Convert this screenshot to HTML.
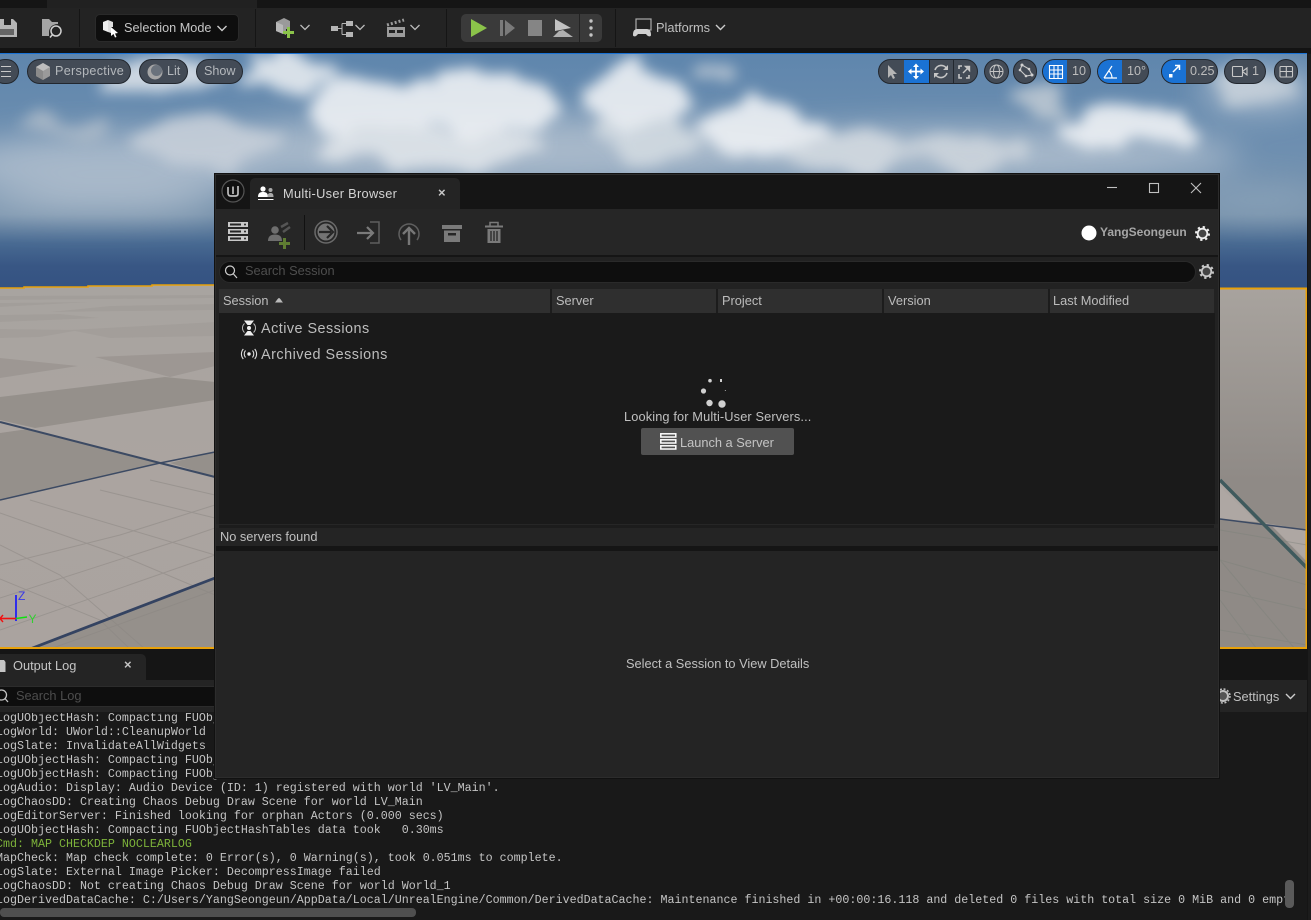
<!DOCTYPE html>
<html><head><meta charset="utf-8">
<style>
html,body{margin:0;padding:0;background:#151515;}
#r{position:relative;width:1311px;height:920px;overflow:hidden;background:#151515;font-family:"Liberation Sans",sans-serif;color:#c0c0c0;font-size:12.5px;}
.a{position:absolute;}
.t{position:absolute;white-space:pre;line-height:16px;}
svg{position:absolute;overflow:visible;}
.p{position:absolute;background:#434b56;border:1px solid #22272e;border-radius:13px;box-sizing:border-box;height:25px;top:59px;}
.blue{position:absolute;background:#1a72d4;top:0;bottom:0;}
.lg{position:absolute;left:-4px;font:11.67px/14px "Liberation Mono",monospace;white-space:pre;color:#c4c4c4;}
</style></head><body><div id="r">

<!-- top strip -->
<div class="a" style="left:47px;top:0;width:210px;height:8px;background:#212121"></div>
<div class="a" style="left:0;top:8px;width:1311px;height:40px;background:#232323"></div>
<div class="a" style="left:0;top:48px;width:1311px;height:5px;background:#131313"></div>
<div class="a" style="left:0;top:53px;width:1307px;height:1px;background:#1a72d4"></div>
<div class="a" style="left:79px;top:9px;width:1px;height:38px;background:#151515"></div>
<div class="a" style="left:255px;top:9px;width:1px;height:38px;background:#151515"></div>
<div class="a" style="left:446px;top:9px;width:1px;height:38px;background:#151515"></div>
<div class="a" style="left:615px;top:9px;width:1px;height:38px;background:#151515"></div>

<!-- save -->
<svg style="left:0;top:0" width="70" height="48"><path d="M-3 19H13L17 23V37H-3Z" fill="#b5b5b5"/><rect x="4" y="19" width="7" height="6" fill="#232323"/><rect x="0" y="29" width="14" height="6" fill="#232323" opacity=".55"/>
<path d="M42 19H49L52 22H58V24C52 24 49 28 49 32V36H42Z" fill="#a5a5a5"/><circle cx="56" cy="31" r="5" fill="none" stroke="#d0d0d0" stroke-width="1.500"/><path d="M52.500 34.500L50 37.500" stroke="#d0d0d0" stroke-width="1.500"/></svg>

<!-- selection mode -->
<div class="a" style="left:95px;top:14px;width:144px;height:28px;box-sizing:border-box;background:#0e0e0e;border:1px solid #2a2a2a;border-radius:5px"></div>
<svg style="left:102px;top:18px" width="18" height="20"><path d="M1 4L6 2V14L1 12Z" fill="#eee"/><path d="M6 2L11 4V9L9 9V15L6 14Z" fill="#ddd"/><path d="M9 9L16 15L13 15.500L14.500 19L13 19.500L11.500 16L9 18Z" fill="#fff"/></svg>
<div class="t" style="left:124px;top:20px;color:#c6c6c6;font-size:12.7px">Selection Mode</div>
<svg style="left:217px;top:25px" width="12" height="8"><path d="M.5 1L5 5.500L9.500 1" fill="none" stroke="#ccc" stroke-width="1.400"/></svg>

<!-- add / hierarchy / clapper -->
<svg style="left:270px;top:14px" width="160" height="28"><path d="M6 8L14 4L20 7V15H16V21L14 20L6 17Z" fill="#9a9a9a"/><path d="M6 8L13 11V20L6 17Z" fill="#b8b8b8"/><rect x="17" y="13" width="3" height="11" fill="#8bc34a"/><rect x="13" y="17" width="11" height="3" fill="#8bc34a"/>
<path d="M30.500 11L35 15.500L39.500 11" fill="none" stroke="#bbb" stroke-width="1.300"/>
<rect x="61" y="12" width="7" height="5" fill="#b5b5b5"/><rect x="76" y="7" width="7" height="5" fill="#b5b5b5"/><rect x="76" y="18" width="7" height="5" fill="#b5b5b5"/><path d="M68 14.500H72M72 9.500V20.500M72 9.500H76M72 20.500H76" stroke="#b5b5b5" fill="none"/>
<path d="M85.500 11L90 15.500L94.500 11" fill="none" stroke="#bbb" stroke-width="1.300"/>
<rect x="117" y="13" width="18" height="10" fill="#9c9c9c"/><rect x="119" y="16" width="6" height="3" fill="#232323"/><rect x="127" y="16" width="6" height="3" fill="#232323"/><path d="M117 11L134 6" stroke="#9c9c9c" stroke-width="3" stroke-dasharray="2 2"/>
<path d="M140.500 11L145 15.500L149.500 11" fill="none" stroke="#bbb" stroke-width="1.300"/></svg>

<!-- play -->
<div class="a" style="left:461px;top:14px;width:141px;height:28px;background:#3a3a3a;border-radius:5px"></div>
<div class="a" style="left:579px;top:14px;width:1px;height:28px;background:#232323"></div>
<svg style="left:461px;top:14px" width="141" height="28"><path d="M10 5L26 14L10 23Z" fill="#8bc34a"/><rect x="39" y="6" width="3" height="16" fill="#7a7a7a"/><path d="M44 6L54 14L44 22Z" fill="#7a7a7a"/><rect x="67" y="6" width="14" height="16" fill="#858585"/><path d="M94 5L110 14L94 17Z" fill="#c2c2c2"/><path d="M98 17L102 16L112 23H92Z" fill="#b0b0b0"/><circle cx="130" cy="7" r="1.700" fill="#c4c4c4"/><circle cx="130" cy="14" r="1.700" fill="#c4c4c4"/><circle cx="130" cy="21" r="1.700" fill="#c4c4c4"/></svg>

<!-- platforms -->
<svg style="left:632px;top:18px" width="22" height="20"><rect x="4" y="1" width="15" height="11" fill="none" stroke="#aaa" stroke-width="1.200"/><path d="M1 17C1 12 3 11 6 11H14C17 11 19 12 19 17C19 19 16 19 14 16H6C4 19 1 19 1 17Z" fill="#d0d0d0"/></svg>
<div class="t" style="left:656px;top:20px;color:#c0c0c0;font-size:12.8px">Platforms</div>
<svg style="left:715px;top:24px" width="12" height="8"><path d="M1 1L5.500 5.500L10 1" fill="none" stroke="#ccc" stroke-width="1.400"/></svg>

<!-- viewport -->
<svg style="left:0;top:54px;width:1307px;height:595px;overflow:hidden" width="1307" height="595" viewBox="0 54 1307 595">
<defs>
<linearGradient id="sky" x1="0" y1="54" x2="0" y2="290" gradientUnits="userSpaceOnUse"><stop offset="0" stop-color="#5f86ad"/><stop offset=".45" stop-color="#7090b0"/><stop offset=".68" stop-color="#7590aa"/><stop offset=".8" stop-color="#486a92"/><stop offset=".9" stop-color="#385684"/><stop offset="1" stop-color="#345382"/></linearGradient>
<linearGradient id="fl" x1="0" y1="288" x2="0" y2="649" gradientUnits="userSpaceOnUse"><stop offset="0" stop-color="#a8a4a0"/><stop offset=".5" stop-color="#aba4a0"/><stop offset="1" stop-color="#aaa39f"/></linearGradient>
<linearGradient id="fr" x1="0" y1="288" x2="0" y2="480" gradientUnits="userSpaceOnUse"><stop offset="0" stop-color="#a8a39e"/><stop offset="1" stop-color="#8f8a86"/></linearGradient>
<filter id="b1" x="-10%" y="-40%" width="120%" height="180%"><feTurbulence type="fractalNoise" baseFrequency=".018 .03" numOctaves="3" seed="4" result="n"/><feDisplacementMap in="SourceGraphic" in2="n" scale="45" xChannelSelector="R" yChannelSelector="G"/><feGaussianBlur stdDeviation="7"/></filter>
<filter id="b2" x="-30%" y="-30%" width="160%" height="160%"><feGaussianBlur stdDeviation="16"/></filter>
</defs>
<rect x="0" y="54" width="1307" height="240" fill="url(#sky)"/>
<g filter="url(#b2)" fill="#b5c2d0" opacity=".8">
<ellipse cx="120" cy="165" rx="170" ry="32"/><ellipse cx="500" cy="150" rx="330" ry="35"/><ellipse cx="960" cy="155" rx="280" ry="28"/><ellipse cx="90" cy="205" rx="130" ry="10"/><ellipse cx="1260" cy="200" rx="70" ry="16" fill="#8ea6bc"/><ellipse cx="1260" cy="90" rx="60" ry="22"/>
</g>
<g filter="url(#b1)" fill="#eef1f4" opacity=".9">
<ellipse cx="160" cy="75" rx="60" ry="14" fill="#d9e0e7"/><ellipse cx="285" cy="72" rx="52" ry="17" fill="#e5eaef"/><ellipse cx="375" cy="110" rx="72" ry="30"/><ellipse cx="490" cy="100" rx="66" ry="32"/><ellipse cx="210" cy="140" rx="70" ry="26" fill="#c6cfd9"/><ellipse cx="430" cy="148" rx="110" ry="20" fill="#dfe4e9"/>
<ellipse cx="635" cy="98" rx="50" ry="32"/><ellipse cx="650" cy="140" rx="45" ry="20" fill="#d2dae1"/><ellipse cx="765" cy="130" rx="65" ry="24"/><ellipse cx="860" cy="152" rx="60" ry="18" fill="#d2d9e0"/><ellipse cx="720" cy="75" rx="22" ry="10" fill="#bcc8d4"/>
<ellipse cx="1125" cy="128" rx="68" ry="21"/><ellipse cx="965" cy="152" rx="65" ry="16" fill="#ccd4dc"/><ellipse cx="1040" cy="103" rx="30" ry="13" fill="#bcc7d2"/><ellipse cx="1250" cy="85" rx="45" ry="16" fill="#c6d0da"/><ellipse cx="60" cy="128" rx="42" ry="12" fill="#a9b8c7"/>
</g>
<!-- floor -->
<polygon points="0,288 24,288 24,287 88,287 88,286 152,286 152,285 215,285 215,284 1219,284 1219,288 1307,288 1307,649 0,649" fill="url(#fl)"/>
<!-- horizon bands -->
<g fill="#8f8a86" opacity=".2">
<polygon points="0,296 215,295 215,298 0,300"/><polygon points="0,303 90,302 0,307"/><polygon points="110,306 215,304 215,310 50,312"/><polygon points="0,315 60,314 100,318 0,322"/><polygon points="70,330 215,322 215,336 110,338"/><polygon points="0,329 80,330 40,337 0,338"/>
</g>
<!-- dark tiles -->
<g fill="#9d9793"><polygon points="0,358 78,366 0,378"/><polygon points="95,357 215,352 215,366 170,377"/></g>
<g fill="#95908b">
<polygon points="0,397 165,377 215,382 215,400 35,428 0,420"/><polygon points="0,433 28,429 160,463 0,500"/><polygon points="170,463 215,452 215,477"/><polygon points="30,649 215,578 215,649"/>
</g>
<polygon points="1219,289 1307,289 1307,530 1258,522 1219,480" fill="url(#fr)"/>
<polygon points="1219,519 1257,522 1273,527 1307,562 1307,649 1219,649" fill="#8f8a86"/>
<polygon points="1219,486 1257,522 1219,518" fill="#aea7a3"/>
<polygon points="1273,527 1307,530 1307,560" fill="#aea7a3"/>
<!-- thin lines -->
<g stroke="#8a8682" stroke-width="1" fill="none" opacity=".5">
<path d="M0 513L120 555L215 595M0 545L60 575L145 649M0 579L100 620L130 649M30 500L215 555M100 490L215 518M150 480L215 495"/>
<path d="M0 565L120 535L215 505M0 598L180 540L215 528M0 630L215 555M50 649L215 590"/>
</g>
<g stroke="#7d807a" stroke-width="1" fill="none" opacity=".45">
<path d="M1220 560L1295 649M1220 600L1257 649M1220 530L1307 545M1220 560L1307 585M1220 590L1307 610M1220 630L1307 645"/>
</g>
<!-- major lines -->
<g fill="none" stroke="#3c4a63">
<path d="M0 422L160 463L215 477" stroke-width="2"/><path d="M0 500L160 463L215 452" stroke-width="1.500"/>
<path d="M1220 519L1307 530" stroke-width="1.500"/>
</g>
<path d="M30 649L215 578" stroke="#344361" stroke-width="2.800" fill="none"/>
<path d="M1220 480L1307 568" stroke="#3f5a5d" stroke-width="3.500" fill="none"/>
<!-- orange border -->
<path d="M0 288H24V287H88V286H152V285H215" stroke="#e8a10a" stroke-width="1.600" fill="none"/>
<path d="M1219 288.500H1306.500V648H0" stroke="#e8a10a" stroke-width="2" fill="none"/>
<!-- gizmo -->
<path d="M16 621V595" stroke="#1010ff" stroke-width="1.600"/><path d="M0 618.500H16" stroke="#f01010" stroke-width="1.600"/><path d="M16 618.500L27 617" stroke="#10e010" stroke-width="1.600"/>
<path d="M3 615L0 618.500L3 622" stroke="#f01010" fill="none" stroke-width="1.400"/>
<text x="18" y="600" font-family="Liberation Sans" font-size="12" fill="#3838e8">Z</text>
<text x="28.500" y="623" font-family="Liberation Sans" font-size="12" fill="#30d030">Y</text>
</svg>

<!-- viewport pills -->
<div class="p" style="left:-8px;width:27px;"></div>
<svg style="left:0;top:65px" width="14" height="14"><path d="M1 1.500H11M1 6.500H11M1 11.500H11" stroke="#c8c8c8" stroke-width="1.100"/></svg>
<div class="p" style="left:27px;width:104px;"></div>
<svg style="left:35px;top:63px" width="16" height="18"><path d="M8 0L15 4V13L8 17L1 13V4Z" fill="#9a9a9a"/><path d="M8 0L15 4L8 8L1 4Z" fill="#bdbdbd"/><path d="M1 4L8 8V17L1 13Z" fill="#8a8a8a"/></svg>
<div class="t" style="left:55px;top:63px;color:#b4b8bc;font-size:12.6px;letter-spacing:.3px">Perspective</div>
<div class="p" style="left:139px;width:49px;"></div>
<svg style="left:147px;top:64px" width="16" height="16"><circle cx="8" cy="8" r="7.500" fill="#a6a6a6"/><circle cx="9.500" cy="6.500" r="5.500" fill="#6a727c"/></svg>
<div class="t" style="left:167px;top:63px;color:#b4b8bc;font-size:12.6px">Lit</div>
<div class="p" style="left:196px;width:47px;"></div>
<div class="t" style="left:204px;top:63px;color:#b4b8bc;font-size:12.6px">Show</div>

<div class="p" style="left:878px;width:100px;overflow:hidden"><div class="blue" style="left:25px;width:25px"></div><div class="a" style="left:50px;top:0;width:1px;height:25px;background:#22272e"></div><div class="a" style="left:74px;top:0;width:1px;height:25px;background:#22272e"></div></div>
<svg style="left:878px;top:59px" width="100" height="25">
<path d="M10 6V19L13 16L15 20L17 19L15 15H19Z" fill="#b5b5b5"/>
<path d="M38 6V19M31.500 12.500H44.500" stroke="#fff" stroke-width="1.800"/><path d="M35 8L38 4.500L41 8ZM35 17L38 20.500L41 17ZM33.500 9.500L30 12.500L33.500 15.500ZM42.500 9.500L46 12.500L42.500 15.500Z" fill="#fff"/>
<path d="M57 11A6.500 6.500 0 0 1 69 10M69 14A6.500 6.500 0 0 1 57 15" fill="none" stroke="#c6c6c6" stroke-width="1.600"/><path d="M70 6V11H65ZM56 19V14H61Z" fill="#c6c6c6"/>
<path d="M81 10V7H84M91 16V19H88M81 15V19H84" fill="none" stroke="#c6c6c6" stroke-width="1.600"/><path d="M85 14L91 8M87.500 7.500H91.500V11.500Z" fill="#c6c6c6" stroke="#c6c6c6" stroke-width="1.400"/>
</svg>
<div class="p" style="left:984px;width:25px"></div>
<svg style="left:984px;top:59px" width="25" height="25"><circle cx="12.500" cy="12.500" r="6.500" fill="none" stroke="#c4c4c4"/><ellipse cx="12.500" cy="12.500" rx="3" ry="6.500" fill="none" stroke="#c4c4c4"/><path d="M6 12.500H19" stroke="#c4c4c4"/></svg>
<div class="p" style="left:1013px;width:24px"></div>
<svg style="left:1013px;top:59px" width="24" height="25"><path d="M9 6L16 10L19 16L13 17L7 11Z" fill="none" stroke="#c8c8c8" stroke-width="1.100"/><g fill="#d0d0d0"><circle cx="9" cy="6" r="1.500"/><circle cx="7" cy="11" r="1.300"/><circle cx="16" cy="10" r="1.300"/><circle cx="19" cy="16" r="1.500"/><circle cx="13" cy="17" r="1.300"/></g></svg>
<div class="p" style="left:1042px;width:49px;overflow:hidden"><div class="blue" style="left:0;width:24px"></div></div>
<svg style="left:1042px;top:59px" width="26" height="25"><path d="M7.500 6.500H20.500V19.500H7.500ZM7.500 11H20.500M7.500 15H20.500M12 6.500V19.500M16 6.500V19.500" fill="none" stroke="#fff" stroke-width="1.100"/></svg>
<div class="t" style="left:1072px;top:63px;color:#bcbcbc;font-size:12.6px">10</div>
<div class="p" style="left:1097px;width:52px;overflow:hidden"><div class="blue" style="left:0;width:24px"></div></div>
<svg style="left:1097px;top:59px" width="26" height="25"><path d="M7 19H20M7 19L15 7M12 12C14 14 15 16 15 19" fill="none" stroke="#fff" stroke-width="1.200"/></svg>
<div class="t" style="left:1127px;top:63px;color:#bcbcbc;font-size:12.6px">10°</div>
<div class="p" style="left:1161px;width:57px;overflow:hidden"><div class="blue" style="left:0;width:24px"></div></div>
<svg style="left:1161px;top:59px" width="26" height="25"><rect x="8" y="15" width="3.500" height="3.500" fill="#fff"/><path d="M12 13L18 7M14 6.500H18.500V11" fill="none" stroke="#fff" stroke-width="1.500"/></svg>
<div class="t" style="left:1190px;top:63px;color:#bcbcbc;font-size:12.6px">0.25</div>
<div class="p" style="left:1224px;width:42px"></div>
<svg style="left:1232px;top:65px" width="18" height="14"><rect x=".5" y="1.500" width="10" height="10" rx="1" fill="none" stroke="#c8c8c8" stroke-width="1.100"/><path d="M11 6L15 3V10L11 7" fill="none" stroke="#c8c8c8" stroke-width="1.100"/></svg>
<div class="t" style="left:1252px;top:63px;color:#bcbcbc;font-size:12.6px">1</div>
<div class="p" style="left:1274px;width:24px"></div>
<svg style="left:1274px;top:59px" width="24" height="25"><rect x="6" y="7.500" width="12.500" height="10.500" rx="1" fill="none" stroke="#c8c8c8" stroke-width="1.100"/><path d="M6 12.500H18.500M12.300 7.500V18" stroke="#c8c8c8" stroke-width="1.100"/></svg>

<!-- right strip -->
<div class="a" style="left:1308px;top:54px;width:3px;height:866px;background:#1c1c1c"></div>

<!-- output log -->
<div class="a" style="left:0;top:654px;width:146px;height:26px;background:#242424;border-radius:0 5px 0 0"></div>
<div class="a" style="left:0;top:680px;width:1307px;height:240px;background:#242424"></div>
<div class="a" style="left:0;top:712px;width:1307px;height:208px;background:#191919"></div>
<div class="a" style="left:0;top:686px;width:1220px;height:21px;background:#0e0e0e;border-top:1px solid #2c2c2c;border-bottom:1px solid #2c2c2c;box-sizing:border-box"></div>
<svg style="left:0;top:658px" width="8" height="15"><path d="M-4 2H4L5.500 4V14H-4Z" fill="#c4c4c4"/></svg>
<div class="t" style="left:13px;top:658px;color:#c4c4c4;font-size:12.8px">Output Log</div>
<div class="t" style="left:124px;top:657px;color:#c4c4c4;font-size:13px;font-weight:bold">×</div>
<svg style="left:0;top:688px" width="12" height="16"><circle cx="1.500" cy="7" r="5" fill="none" stroke="#c4c4c4" stroke-width="1.300"/><path d="M5 10.500L8 14" stroke="#c4c4c4" stroke-width="1.300"/></svg>
<div class="t" style="left:16px;top:688px;color:#4d4d4d;font-size:12.8px">Search Log</div>
<svg style="left:1216px;top:689px" width="14" height="14"><circle cx="7" cy="7" r="5" fill="#555" stroke="#c0c0c0" stroke-width="2"/><circle cx="7" cy="7" r="7" fill="none" stroke="#c0c0c0" stroke-width="1.500" stroke-dasharray="2 1.700"/></svg>
<div class="t" style="left:1233px;top:689px;color:#c0c0c0;font-size:12.8px">Settings</div>
<svg style="left:1285px;top:693px" width="12" height="8"><path d="M1 1L5.500 5.500L10 1" fill="none" stroke="#ccc" stroke-width="1.400"/></svg>

<div class="a" style="left:0;top:713px;width:1285px;height:194px;overflow:hidden">
<div class="lg" style="top:-2px">LogUObjectHash: Compacting FUObjectHashTables data took   0.30ms</div>
<div class="lg" style="top:12px">LogWorld: UWorld::CleanupWorld</div>
<div class="lg" style="top:26px">LogSlate: InvalidateAllWidgets</div>
<div class="lg" style="top:40px">LogUObjectHash: Compacting FUObjectHashTables data took   0.30ms</div>
<div class="lg" style="top:54px">LogUObjectHash: Compacting FUObjectHashTables data took   0.30ms</div>
<div class="lg" style="top:68px">LogAudio: Display: Audio Device (ID: 1) registered with world 'LV_Main'.</div>
<div class="lg" style="top:82px">LogChaosDD: Creating Chaos Debug Draw Scene for world LV_Main</div>
<div class="lg" style="top:96px">LogEditorServer: Finished looking for orphan Actors (0.000 secs)</div>
<div class="lg" style="top:110px">LogUObjectHash: Compacting FUObjectHashTables data took   0.30ms</div>
<div class="lg" style="top:124px;color:#7db33a">Cmd: MAP CHECKDEP NOCLEARLOG</div>
<div class="lg" style="top:138px">MapCheck: Map check complete: 0 Error(s), 0 Warning(s), took 0.051ms to complete.</div>
<div class="lg" style="top:152px">LogSlate: External Image Picker: DecompressImage failed</div>
<div class="lg" style="top:166px">LogChaosDD: Not creating Chaos Debug Draw Scene for world World_1</div>
<div class="lg" style="top:180px">LogDerivedDataCache: C:/Users/YangSeongeun/AppData/Local/UnrealEngine/Common/DerivedDataCache: Maintenance finished in +00:00:16.118 and deleted 0 files with total size 0 MiB and 0 empty folders.</div>
</div>
<div class="a" style="left:0;top:908px;width:416px;height:9px;background:#4f4f4f;border-radius:4px"></div>
<div class="a" style="left:1285px;top:880px;width:9px;height:28px;background:#5a5a5a;border-radius:4px"></div>

<!-- WINDOW -->
<div class="a" style="left:215px;top:174px;width:1004px;height:604px;background:#151515;box-sizing:border-box;border:1px solid #2c2c2c;box-shadow:0 0 0 1px #111"></div>
<div class="a" style="left:250px;top:178px;width:210px;height:31px;background:#242424;border-radius:5px 5px 0 0"></div>
<svg style="left:220px;top:178px" width="26" height="26"><circle cx="13" cy="13" r="11" fill="#111" stroke="#555" stroke-width="1.200"/><path d="M8 9V15Q8 18 11 18H15.500Q18 18 18 15.500V8M13 8.500V16" fill="none" stroke="#bdbdbd" stroke-width="1.700"/></svg>
<svg style="left:258px;top:186px" width="17" height="15"><circle cx="5" cy="3" r="2.600" fill="#fff"/><path d="M0 11C0 7 2 6 5 6S10 7 10 11Z" fill="#fff"/><circle cx="12.500" cy="4" r="2" fill="#aaa"/><path d="M9.500 11C9.500 8 10.500 7 12.500 7S15.500 8 15.500 11Z" fill="#aaa"/><path d="M0 13.500H15.500" stroke="#fff"/></svg>
<div class="t" style="left:283px;top:186px;color:#d4d4d4;font-size:12.8px;letter-spacing:.3px">Multi-User Browser</div>
<div class="t" style="left:438px;top:185px;color:#c8c8c8;font-size:13px;font-weight:bold">×</div>
<svg style="left:1100px;top:178px" width="110" height="20"><path d="M7 9.500H17" stroke="#c0c0c0" stroke-width="1.100"/><rect x="49.500" y="5.500" width="9" height="9" fill="none" stroke="#c0c0c0" stroke-width="1.100"/><path d="M91 5L101 15M101 5L91 15" stroke="#c0c0c0" stroke-width="1.100"/></svg>

<div class="a" style="left:216px;top:209px;width:1002px;height:46px;background:#262626"></div>
<div class="a" style="left:216px;top:257px;width:1002px;height:32px;background:#222"></div>
<div class="a" style="left:304px;top:215px;width:1px;height:35px;background:#111"></div>

<!-- toolbar icons -->
<svg style="left:216px;top:209px" width="300" height="46">
<g fill="#c8c8c8"><rect x="12" y="13" width="20" height="5"/><rect x="12" y="20" width="20" height="5"/><rect x="12" y="27" width="20" height="5"/></g>
<g fill="#262626"><rect x="14" y="14.500" width="11" height="2"/><rect x="14" y="21.500" width="11" height="2"/><rect x="14" y="28.500" width="11" height="2"/><circle cx="29" cy="15.500" r="1"/><circle cx="29" cy="22.500" r="1"/><circle cx="29" cy="29.500" r="1"/></g>
<circle cx="59" cy="21" r="3.800" fill="#6e6e6e"/><path d="M52 32C52 27 55 25.500 59 25.500S66 27 66 32Z" fill="#6e6e6e"/><path d="M65 18L72 14M67 23L74 18" stroke="#555" stroke-width="2.500"/><rect x="67" y="29" width="3" height="11" fill="#5f7d32"/><rect x="63" y="33" width="11" height="3" fill="#5f7d32"/>
<circle cx="110" cy="23" r="11" fill="none" stroke="#6a6a6a" stroke-width="1.500"/><circle cx="110" cy="23" r="8.500" fill="#737373"/><path d="M103 23H115M111 17L117 23L111 29" stroke="#262626" stroke-width="2.200" fill="none"/>
<path d="M141 24H157M151 18L157 24L151 30" fill="none" stroke="#7a7a7a" stroke-width="2.200"/><path d="M154 13H163V34H154" fill="none" stroke="#5f5f5f" stroke-width="1.500"/>
<path d="M185 31A10 10 0 1 1 201 31" fill="none" stroke="#5f5f5f" stroke-width="1.500"/><path d="M193 36V19M187 25L193 19L199 25" fill="none" stroke="#777" stroke-width="2.400"/>
<rect x="226" y="16" width="20" height="4" fill="#7a7a7a"/><path d="M228 21.500H244V33H228Z" fill="#7a7a7a"/><rect x="232" y="24" width="8" height="2.500" fill="#262626"/>
<rect x="269" y="16.500" width="18" height="2" fill="#7a7a7a"/><path d="M274 16.500V13.500H282V16.500" fill="none" stroke="#7a7a7a" stroke-width="1.500"/><path d="M271.500 20H284.500V34H271.500Z" fill="#7a7a7a"/><path d="M275 22V32M278 22V32M281 22V32" stroke="#262626" stroke-width="1.300"/>
</svg>
<svg style="left:1081px;top:225px" width="16" height="16"><circle cx="8" cy="8" r="7.500" fill="#fff"/></svg>
<div class="t" style="left:1100px;top:224px;color:#a6a6a6;font-size:12px;font-weight:bold">YangSeongeun</div>
<svg style="left:1195px;top:226px" width="15" height="15"><circle cx="7.500" cy="7.500" r="4.800" fill="#444" stroke="#eee" stroke-width="1.800"/><circle cx="7.500" cy="7.500" r="6.500" fill="none" stroke="#eee" stroke-width="2" stroke-dasharray="2.300 2.800"/></svg>

<!-- search -->
<div class="a" style="left:219px;top:261px;width:977px;height:22px;box-sizing:border-box;background:#0e0e0e;border:1px solid #2a2a2a;border-radius:11px"></div>
<svg style="left:224px;top:264px" width="16" height="16"><circle cx="6" cy="6.500" r="4.500" fill="none" stroke="#d0d0d0" stroke-width="1.200"/><path d="M9.500 10L13 14" stroke="#d0d0d0" stroke-width="1.200"/></svg>
<div class="t" style="left:245px;top:263px;color:#4e4e4e;font-size:12.8px">Search Session</div>
<svg style="left:1199px;top:264px" width="15" height="15"><circle cx="7.500" cy="7.500" r="4.800" fill="#444" stroke="#c8c8c8" stroke-width="1.800"/><circle cx="7.500" cy="7.500" r="6.500" fill="none" stroke="#c8c8c8" stroke-width="2" stroke-dasharray="2.300 2.800"/></svg>

<!-- table header -->
<div class="a" style="left:216px;top:289px;width:1002px;height:235px;background:#222"></div>
<div class="a" style="left:219px;top:289px;width:995px;height:24px;background:#2f2f2f"></div>
<div class="a" style="left:550px;top:289px;width:2px;height:24px;background:#1c1c1c"></div>
<div class="a" style="left:716px;top:289px;width:2px;height:24px;background:#1c1c1c"></div>
<div class="a" style="left:882px;top:289px;width:2px;height:24px;background:#1c1c1c"></div>
<div class="a" style="left:1048px;top:289px;width:2px;height:24px;background:#1c1c1c"></div>
<div class="t" style="left:223px;top:293px;color:#bcbcbc;font-size:12.8px">Session</div>
<svg style="left:275px;top:298px" width="8" height="5"><path d="M0 4.500C1 3.500 3 0 4 0S7 3.500 8 4.500Z" fill="#bbb"/></svg>
<div class="t" style="left:556px;top:293px;color:#bcbcbc;font-size:12.8px">Server</div>
<div class="t" style="left:722px;top:293px;color:#bcbcbc;font-size:12.8px">Project</div>
<div class="t" style="left:888px;top:293px;color:#bcbcbc;font-size:12.8px">Version</div>
<div class="t" style="left:1053px;top:293px;color:#bcbcbc;font-size:12.8px">Last Modified</div>

<!-- list -->
<div class="a" style="left:219px;top:313px;width:996px;height:211px;background:#1a1a1a"></div>
<svg style="left:241px;top:320px" width="16" height="16"><path d="M3 0.500H13L9.500 5H6.500ZM3 15.500H13L9.500 11H6.500Z" fill="#eee"/><circle cx="8" cy="8" r="2" fill="#eee"/><path d="M3.500 3.500C0.800 6 0.800 10 3.500 12.500M12.500 3.500C15.200 6 15.200 10 12.500 12.500" fill="none" stroke="#bbb"/></svg>
<div class="t" style="left:261px;top:321px;color:#bdbdbd;font-size:14.4px;letter-spacing:.47px">Active Sessions</div>
<svg style="left:241px;top:346px" width="16" height="16"><circle cx="8" cy="8" r="1.700" fill="#eee"/><path d="M4.500 4.500C2.800 6.500 2.800 9.500 4.500 11.500M11.500 4.500C13.200 6.500 13.200 9.500 11.500 11.500M2.300 3C-0.200 6 -0.200 10 2.300 13M13.700 3C16.200 6 16.200 10 13.700 13" fill="none" stroke="#ddd" stroke-width="1.100"/></svg>
<div class="t" style="left:261px;top:347px;color:#bdbdbd;font-size:14.4px;letter-spacing:.5px">Archived Sessions</div>
<svg style="left:695px;top:375px" width="40" height="36"><g fill="#d0d0d0"><circle cx="15" cy="5.700" r="1.800"/><rect x="25" y="4" width="2" height="3"/><circle cx="8.500" cy="16" r="2.600"/><circle cx="30.300" cy="15.500" r=".5"/><circle cx="14.500" cy="28" r="3.200"/><circle cx="27" cy="29" r="3.700"/></g></svg>
<div class="t" style="left:624px;top:409px;color:#c0c0c0;font-size:12.8px;letter-spacing:.12px">Looking for Multi-User Servers...</div>
<div class="a" style="left:641px;top:428px;width:153px;height:27px;background:#515151;border-radius:2px"></div>
<svg style="left:660px;top:433px" width="18" height="17"><g fill="none" stroke="#fff" stroke-width="1.500"><rect x=".8" y=".8" width="15" height="3.200"/><rect x=".8" y="6.800" width="15" height="3.200"/><rect x=".8" y="12.800" width="15" height="3.200"/></g></svg>
<div class="t" style="left:680px;top:435px;color:#c4c4c4;font-size:12.8px">Launch a Server</div>

<!-- status -->
<div class="a" style="left:216px;top:524px;width:1002px;height:4px;background:#262626"></div>
<div class="a" style="left:219px;top:525px;width:995px;height:3px;background:#1c1c1c"></div>
<div class="a" style="left:216px;top:528px;width:1002px;height:18px;background:#242424"></div>
<div class="t" style="left:220px;top:529px;color:#c0c0c0;font-size:12.8px">No servers found</div>
<div class="a" style="left:216px;top:546px;width:1002px;height:5px;background:#151515"></div>
<div class="a" style="left:216px;top:551px;width:1002px;height:226px;background:#242424"></div>
<div class="t" style="left:626px;top:656px;color:#c0c0c0;font-size:12.8px">Select a Session to View Details</div>

</div></body></html>
